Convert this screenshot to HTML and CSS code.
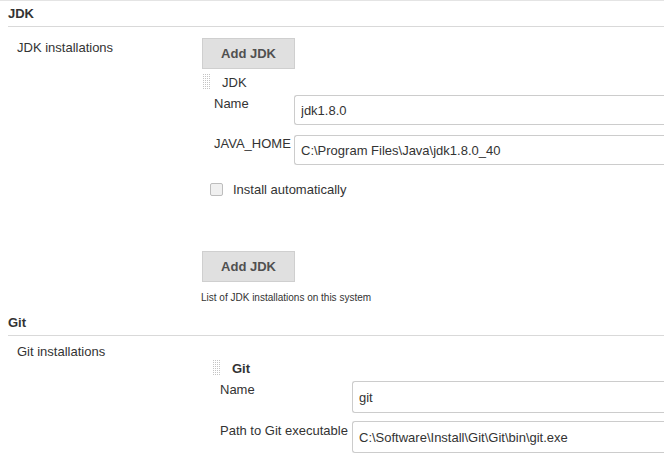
FILE: index.html
```
<!DOCTYPE html>
<html lang="en">
<head>
    <meta charset="UTF-8">
    <title>Global Tool Configuration</title>
    <link rel="stylesheet" href="styles.css">
</head>
<body>
<div class="page">

    <div class="section-title first">JDK</div>
    <div class="setting">
        <div class="setting-name">JDK installations</div>
        <div class="setting-main">
            <button class="add-btn" type="button">Add JDK</button>

            <div class="repeated jdk">
                <div class="repeated-head">
                    <svg class="handle" width="7" height="16" viewBox="0 0 7 16">
                        <defs>
                            <pattern id="dots1" width="2" height="2" patternUnits="userSpaceOnUse">
                                <rect width="1" height="1" fill="#c4c4c4"/>
                            </pattern>
                        </defs>
                        <rect width="7" height="16" fill="url(#dots1)"/>
                    </svg>
                    <span class="repeated-title">JDK</span>
                </div>
                <div class="field first-field">
                    <label>Name</label>
                    <input type="text" value="jdk1.8.0">
                </div>
                <div class="field">
                    <label>JAVA_HOME</label>
                    <input type="text" value="C:\Program Files\Java\jdk1.8.0_40">
                </div>
                <div class="check-row">
                    <input type="checkbox" id="auto-jdk">
                    <label for="auto-jdk">Install automatically</label>
                </div>
            </div>

            <button class="add-btn bottom" type="button">Add JDK</button>
            <div class="help">List of JDK installations on this system</div>
        </div>
    </div>

    <div class="section-title">Git</div>
    <div class="setting git-setting">
        <div class="setting-name">Git installations</div>
        <div class="setting-main">
            <div class="repeated git">
                <div class="repeated-head">
                    <svg class="handle" width="7" height="16" viewBox="0 0 7 16">
                        <defs>
                            <pattern id="dots2" width="2" height="2" patternUnits="userSpaceOnUse">
                                <rect width="1" height="1" fill="#c4c4c4"/>
                            </pattern>
                        </defs>
                        <rect width="7" height="16" fill="url(#dots2)"/>
                    </svg>
                    <span class="repeated-title bold">Git</span>
                </div>
                <div class="field first-field">
                    <label>Name</label>
                    <input type="text" value="git">
                </div>
                <div class="field">
                    <label>Path to Git executable</label>
                    <input type="text" value="C:\Software\Install\Git\Git\bin\git.exe">
                </div>
            </div>
        </div>
    </div>

</div>
</body>
</html>
```

FILE: styles.css
```
html, body {
    margin: 0;
    padding: 0;
    overflow: hidden;
    background-color: #fff;
}
body {
    font-family: 'Liberation Sans', Arial, sans-serif;
    font-size: 13px;
    color: #333;
    border-top: 1px solid #e4e4e4;
}
.section-title {
    margin-left: 8px;
    height: 25px;
    line-height: 25px;
    font-weight: bold;
    border-bottom: 1px solid #d9d9d9;
    margin-top: 6px;
}
.section-title.first {
    margin-top: 0;
}
.setting {
    display: flex;
    padding-left: 17px;
    margin-top: 11px;
}
.setting-name {
    width: 185px;
    flex-shrink: 0;
    padding-top: 2px;
    line-height: 15px;
}
.setting-main {
    flex: 1;
    min-width: 0;
}
.add-btn {
    display: block;
    width: 93px;
    height: 31px;
    background-color: #e0e0e0;
    border: 1px solid #cfcfcf;
    border-radius: 0;
    font-family: inherit;
    font-size: 13px;
    font-weight: bold;
    color: #505050;
    padding: 0;
}
.add-btn.bottom {
    margin-top: 53px;
}
.repeated-head {
    display: flex;
    align-items: center;
    height: 22px;
    margin-top: 2px;
}
.handle {
    flex-shrink: 0;
    margin-right: 12px;
}
.repeated-title.bold {
    font-weight: bold;
}
.jdk {
    padding-left: 1px;
}
.jdk .field {
    padding-left: 11px;
}
.jdk .field label {
    width: 80px;
}
.field {
    display: flex;
    margin-top: 10px;
}
.field.first-field {
    margin-top: 2px;
}
.field label {
    flex-shrink: 0;
    padding-top: 1px;
    line-height: 15px;
}
.field input {
    flex: 1;
    min-width: 0;
    height: 30px;
    box-sizing: border-box;
    border: 1px solid #cccccc;
    border-right: none;
    border-radius: 3px 0 0 3px;
    padding: 0 6px;
    font-family: inherit;
    font-size: 13px;
    color: #333;
    margin: 0;
}
.check-row {
    display: flex;
    align-items: center;
    margin-top: 16px;
    height: 17px;
    padding-left: 6px;
}
.check-row input {
    appearance: none;
    -webkit-appearance: none;
    width: 13px;
    height: 13px;
    margin: 0 10px 0 1px;
    border: 1px solid #bdbdbd;
    border-radius: 2px;
    background-color: #f0f0f0;
    box-sizing: border-box;
}
.help {
    font-size: 10px;
    line-height: 12px;
    margin-top: 10px;
    margin-left: -1px;
}
.git-setting {
    margin-top: 6px;
}
.git {
    margin-top: 15px;
    padding-left: 11px;
}
.git .field {
    padding-left: 7px;
}
.git .field label {
    width: 132px;
}
.git .field input {
    height: 32px;
}
.git .field + .field {
    margin-top: 8px;
}
.git .field:last-child label {
    padding-top: 2px;
}
```
